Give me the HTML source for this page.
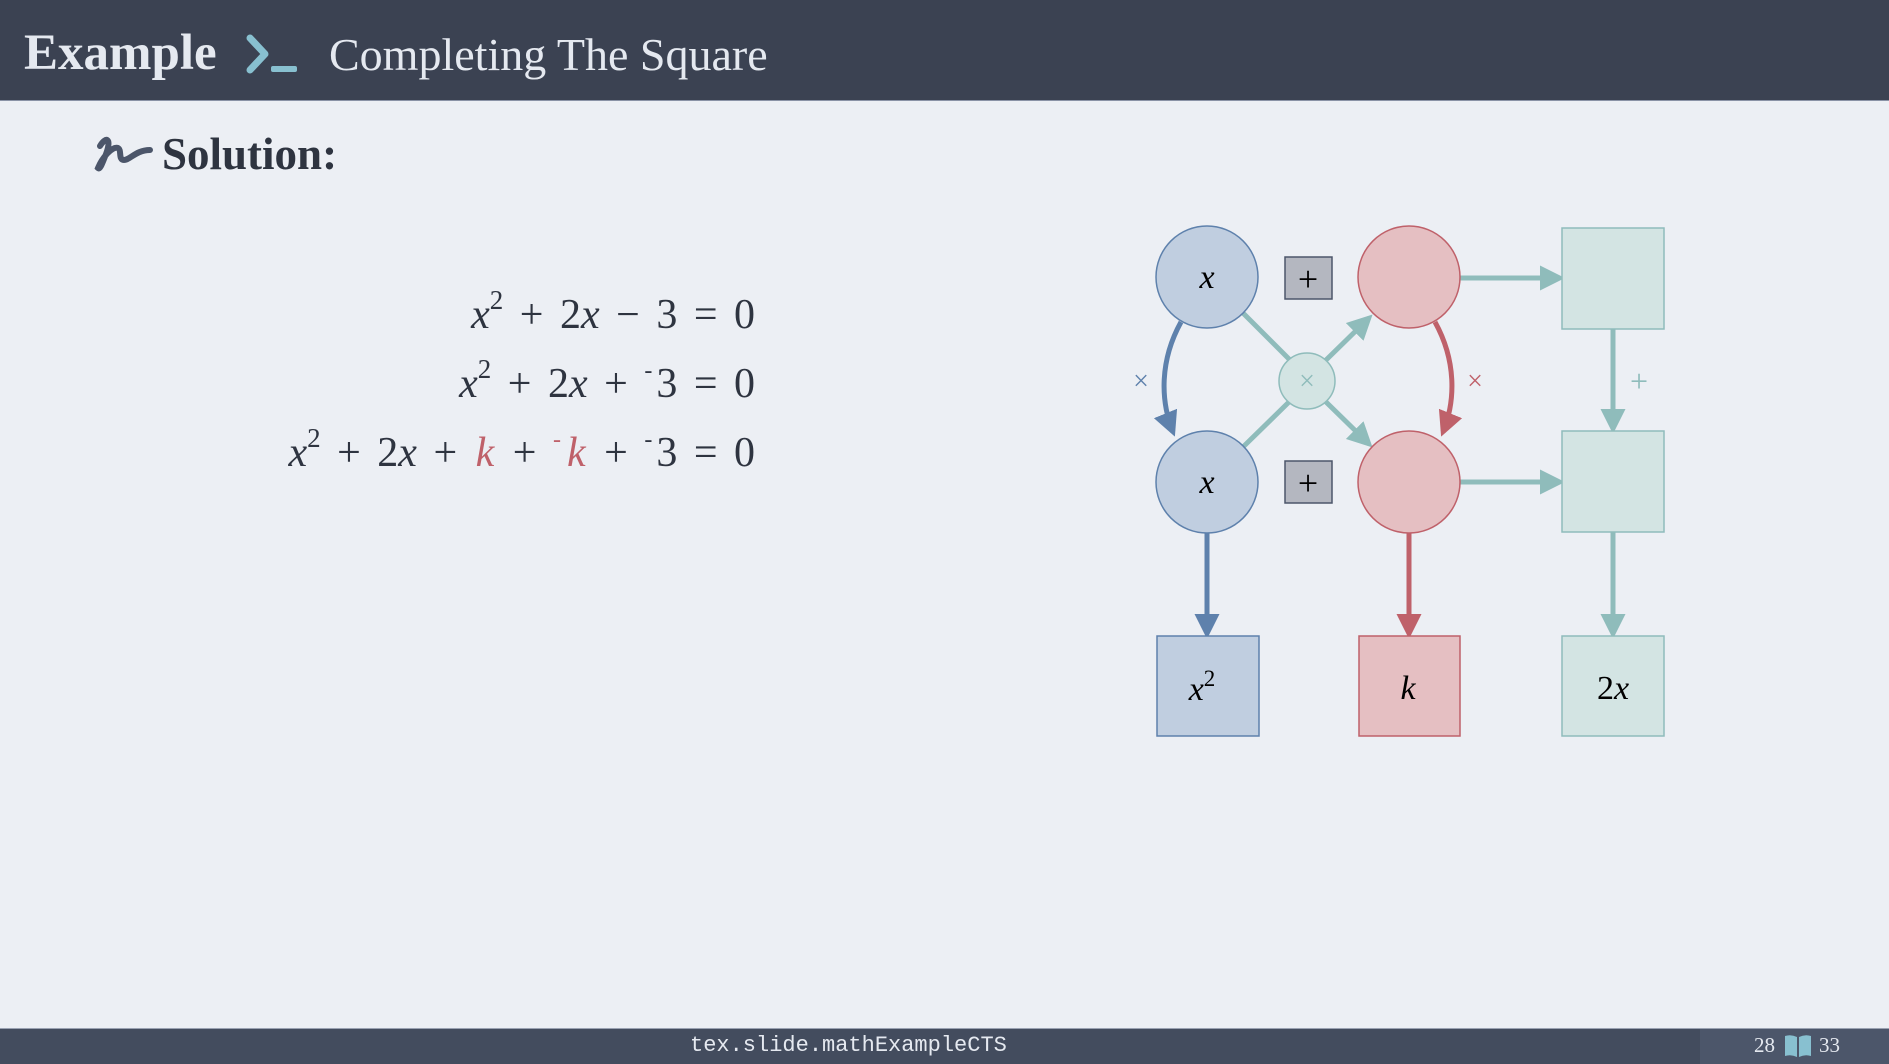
<!DOCTYPE html>
<html><head><meta charset="utf-8"><style>
*{margin:0;padding:0}
body{width:1889px;height:1063px;background:#eceff4;position:relative;overflow:hidden;font-family:"Liberation Serif",serif;color:#2e3440}
.hdr{position:absolute;left:0;top:0;width:1889px;height:100px;background:#3b4252;border-bottom:1px solid #8a93a6}
.hdr .t1{position:absolute;left:24px;top:24px;font-size:51px;font-weight:bold;color:#e5e9f0}
.hdr .t2{position:absolute;left:329px;top:28px;font-size:46px;color:#e5e9f0}
.sol{position:absolute;left:162px;top:128px;font-size:45px;font-weight:bold;color:#2e3440}
.eq{position:absolute;right:1134px;font-size:42px;line-height:1;white-space:nowrap;text-align:right}
.eq i{font-style:italic}
.eq b{font-weight:normal;margin:0 6px}
.eq sup{font-size:27px;position:relative;top:-4px;line-height:0}
.eq sup.m{font-size:24px;margin-right:4px}
.eq i.r{margin:0 2px}
.r{color:#bf616a}
.ft{position:absolute;left:0;top:1028px;width:1889px;height:35px;background:#434c5e;border-top:1px solid #9aa2b2}
.ft .m{position:absolute;left:690px;top:4px;font-family:"Liberation Mono",monospace;font-size:22px;color:#e5e9f0}
.ft .rp{position:absolute;left:1700px;top:0;width:189px;height:35px;background:#4c566a}
.ft .n{position:absolute;top:4px;font-size:21px;color:#e5e9f0}
</style></head><body>
<div class="hdr">
<div class="t1">Example</div>
<svg style="position:absolute;left:245px;top:34px" width="56" height="42"><path d="M5 4 L20 20 L5 36" stroke="#88c0d0" stroke-width="7" fill="none" stroke-linecap="round" stroke-linejoin="round"/><rect x="26" y="32" width="26" height="6" rx="2" fill="#88c0d0"/></svg>
<div class="t2">Completing The Square</div>
</div>
<svg style="position:absolute;left:92px;top:134px" width="62" height="40"><path d="M8 12 C14 2 20 4 14 20 C10 30 8 36 6 34 C10 24 20 12 26 14 C30 16 26 26 32 26 C38 26 44 16 58 16" stroke="#4c566a" stroke-width="6" fill="none" stroke-linecap="round"/></svg>
<div class="sol">Solution:</div>
<div class="eq" style="top:294px"><i>x</i><sup>2</sup> <b>+</b> 2<i>x</i> <b>−</b> 3 <b>=</b> 0</div>
<div class="eq" style="top:363px"><i>x</i><sup>2</sup> <b>+</b> 2<i>x</i> <b>+</b> <sup class="m">-</sup>3 <b>=</b> 0</div>
<div class="eq" style="top:432px"><i>x</i><sup>2</sup> <b>+</b> 2<i>x</i> <b>+</b> <i class="r">k</i> <b>+</b> <sup class="m r">-</sup><i class="r">k</i> <b>+</b> <sup class="m">-</sup>3 <b>=</b> 0</div>

<svg style="position:absolute;left:0;top:0" width="1889" height="1063">
<defs>
<marker id="tb" markerWidth="5" markerHeight="5" refX="4" refY="2.5" orient="auto" markerUnits="strokeWidth"><path d="M0 0 L5 2.5 L0 5 Z" fill="#8fbcbb"/></marker>
<marker id="bb" markerWidth="5" markerHeight="5" refX="4" refY="2.5" orient="auto" markerUnits="strokeWidth"><path d="M0 0 L5 2.5 L0 5 Z" fill="#5e81ac"/></marker>
<marker id="rb" markerWidth="5" markerHeight="5" refX="4" refY="2.5" orient="auto" markerUnits="strokeWidth"><path d="M0 0 L5 2.5 L0 5 Z" fill="#bf616a"/></marker>
</defs>
<g stroke-width="5" fill="none">
<line x1="1243" y1="313" x2="1290" y2="360" stroke="#8fbcbb"/>
<line x1="1243" y1="447" x2="1290" y2="401" stroke="#8fbcbb"/>
<line x1="1325" y1="361" x2="1369" y2="318" stroke="#8fbcbb" marker-end="url(#tb)"/>
<line x1="1325" y1="401" x2="1369" y2="444" stroke="#8fbcbb" marker-end="url(#tb)"/>
<line x1="1460" y1="278" x2="1560" y2="278" stroke="#8fbcbb" marker-end="url(#tb)"/>
<line x1="1460" y1="482" x2="1560" y2="482" stroke="#8fbcbb" marker-end="url(#tb)"/>
<line x1="1613" y1="329" x2="1613" y2="429" stroke="#8fbcbb" marker-end="url(#tb)"/>
<line x1="1613" y1="532" x2="1613" y2="634" stroke="#8fbcbb" marker-end="url(#tb)"/>
<line x1="1207" y1="533" x2="1207" y2="634" stroke="#5e81ac" marker-end="url(#bb)"/>
<line x1="1409" y1="533" x2="1409" y2="634" stroke="#bf616a" marker-end="url(#rb)"/>
<path d="M1181 322 C1160 360 1160 400 1173 432" stroke="#5e81ac" marker-end="url(#bb)"/>
<path d="M1435 322 C1456 360 1456 400 1443 432" stroke="#bf616a" marker-end="url(#rb)"/>
</g>
<g stroke-width="1.5">
<circle cx="1207" cy="277" r="51" fill="#c0cee0" stroke="#5e81ac"/>
<circle cx="1207" cy="482" r="51" fill="#c0cee0" stroke="#5e81ac"/>
<circle cx="1409" cy="277" r="51" fill="#e5bfc2" stroke="#bf616a"/>
<circle cx="1409" cy="482" r="51" fill="#e5bfc2" stroke="#bf616a"/>
<circle cx="1307" cy="381" r="28" fill="#d3e4e3" stroke="#8fbcbb"/>
<rect x="1157" y="636" width="102" height="100" fill="#c0cee0" stroke="#5e81ac"/>
<rect x="1359" y="636" width="101" height="100" fill="#e5bfc2" stroke="#bf616a"/>
<rect x="1562" y="228" width="102" height="101" fill="#d3e4e3" stroke="#8fbcbb"/>
<rect x="1562" y="431" width="102" height="101" fill="#d3e4e3" stroke="#8fbcbb"/>
<rect x="1562" y="636" width="102" height="100" fill="#d3e4e3" stroke="#8fbcbb"/>
<rect x="1285" y="257" width="47" height="42" fill="#b4b7c0" stroke="#4c566a"/>
<rect x="1285" y="461" width="47" height="42" fill="#b4b7c0" stroke="#4c566a"/>
</g>
<g font-family="Liberation Serif, serif" text-anchor="middle" fill="#000">
<text x="1207" y="288" font-size="34" font-style="italic">x</text>
<text x="1207" y="493" font-size="34" font-style="italic">x</text>
<text x="1202" y="700" font-size="34" font-style="italic">x<tspan font-size="23" font-style="normal" dy="-14">2</tspan></text>
<text x="1408" y="699" font-size="34" font-style="italic">k</text>
<text x="1613" y="699" font-size="34">2<tspan font-style="italic">x</tspan></text>
<text x="1308" y="291" font-size="36">+</text>
<text x="1308" y="495" font-size="36">+</text>
<text x="1307" y="390" font-size="28" fill="#8fbcbb">×</text>
<text x="1141" y="390" font-size="28" fill="#5e81ac">×</text>
<text x="1475" y="390" font-size="28" fill="#bf616a">×</text>
<text x="1639" y="392" font-size="32" fill="#8fbcbb">+</text>
</g>
</svg>

<div class="ft">
<div class="m">tex.slide.mathExampleCTS</div>
<div class="rp"></div>
<div class="n" style="left:1754px">28</div>
<svg style="position:absolute;left:1783px;top:4px" width="30" height="26"><path d="M2 3 Q8 1 14 4 L14 24 Q8 21 2 23 Z M16 4 Q22 1 28 3 L28 23 Q22 21 16 24 Z" fill="#88c0d0"/></svg>
<div class="n" style="left:1819px">33</div>
</div>
</body></html>
